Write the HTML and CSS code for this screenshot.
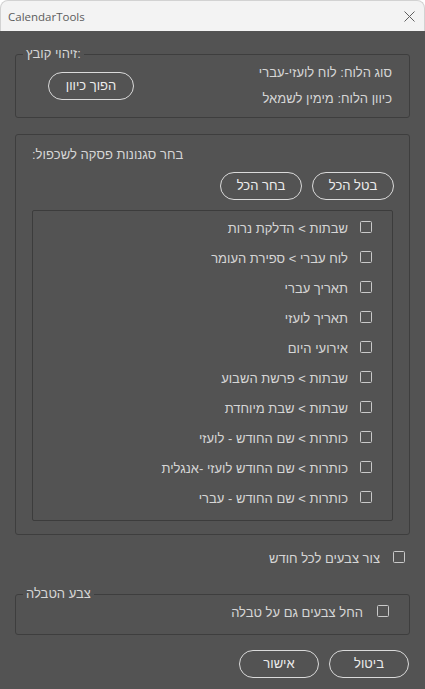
FILE: index.html
```html
<!DOCTYPE html>
<html lang="he">
<head>
<meta charset="utf-8">
<title>CalendarTools</title>
<link rel="stylesheet" href="styles.css">
</head>
<body>
<div class="window">
  <header class="titlebar">
    <span class="title">CalendarTools</span>
    <svg class="close" width="11" height="11" viewBox="0 0 11 11"><path d="M0.5 0.5 L10.5 10.5 M10.5 0.5 L0.5 10.5" stroke="#5f5f5f" stroke-width="1" fill="none"/></svg>
  </header>
  <main class="content">
    <fieldset class="group group-file">
      <legend class="legend-ltr">זיהוי קובץ:</legend>
      <div class="file-row">
        <div class="file-info">
          <div class="line">סוג הלוח: לוח לועזי-עברי</div>
          <div class="line">כיוון הלוח: מימין לשמאל</div>
        </div>
        <button class="pill btn-flip">הפוך כיוון</button>
      </div>
    </fieldset>

    <section class="box group-styles">
      <div class="styles-label">בחר סגנונות פסקה לשכפול:</div>
      <div class="btn-row">
        <button class="pill btn-sel">בטל הכל</button>
        <button class="pill btn-sel">בחר הכל</button>
      </div>
      <ul class="list">
        <li class="item"><span class="check"></span><span>שבתות &gt; הדלקת נרות</span></li>
        <li class="item"><span class="check"></span><span>לוח עברי &gt; ספירת העומר</span></li>
        <li class="item"><span class="check"></span><span>תאריך עברי</span></li>
        <li class="item"><span class="check"></span><span>תאריך לועזי</span></li>
        <li class="item"><span class="check"></span><span>אירועי היום</span></li>
        <li class="item"><span class="check"></span><span>שבתות &gt; פרשת השבוע</span></li>
        <li class="item"><span class="check"></span><span>שבתות &gt; שבת מיוחדת</span></li>
        <li class="item"><span class="check"></span><span>כותרות &gt; שם החודש - לועזי</span></li>
        <li class="item"><span class="check"></span><span>כותרות &gt; שם החודש לועזי -אנגלית</span></li>
        <li class="item"><span class="check"></span><span>כותרות &gt; שם החודש - עברי</span></li>
      </ul>
    </section>

    <div class="option-row month-row"><span class="check"></span><span>צור צבעים לכל חודש</span></div>

    <fieldset class="group group-table">
      <legend>צבע הטבלה</legend>
      <div class="option-row table-row"><span class="check"></span><span>החל צבעים גם על טבלה</span></div>
    </fieldset>

    <div class="actions">
      <button class="pill btn-action">ביטול</button>
      <button class="pill btn-action">אישור</button>
    </div>
  </main>
</div>
</body>
</html>
```

FILE: styles.css
```css
* { box-sizing: border-box; }

body {
  margin: 0;
  background: #ffffff;
  font-family: "Liberation Sans", Arial, sans-serif;
  font-size: 13px;
  color: #d6d6d6;
}

.window {
  width: 425px;
  height: 689px;
  display: flex;
  flex-direction: column;
}

.titlebar {
  height: 31px;
  flex: none;
  background: #f3f3f3;
  border: 1px solid #d2d2d2;
  border-bottom: none;
  border-radius: 8px 8px 0 0;
  display: flex;
  align-items: center;
  justify-content: space-between;
  padding: 0 9px 0 7px;
  font-family: "Open Sans", "Noto Sans", sans-serif;
  font-size: 11.5px;
  color: #5c5c5c;
}

.close { display: block; }

.content {
  flex: 1;
  background: #535353;
  padding: 0 15px;
  display: flex;
  flex-direction: column;
}

.group {
  margin: 0;
  padding: 0 0 0 7px;
  border: 1px solid #3e3e3e;
  border-radius: 3px;
  min-width: 0;
  direction: ltr;
}

.group legend {
  padding: 0 3px;
  line-height: 16px;
  direction: rtl;
}

.group .legend-ltr { direction: ltr; }

.group-file { margin-top: 15px; }

.file-row {
  direction: rtl;
  display: flex;
  align-items: center;
  justify-content: space-between;
  padding: 3px 17px 10px 25px;
}

.line { line-height: 16px; }
.line + .line { margin-top: 10px; }

.pill {
  height: 28px;
  padding: 0;
  border: 1px solid #dadada;
  border-radius: 14px;
  background: transparent;
  color: #ececec;
  font: inherit;
  line-height: 26px;
}

.btn-flip { width: 86px; }
.btn-sel { width: 82px; }
.btn-action { width: 80px; }

.box {
  margin-top: 16px;
  border: 1px solid #3e3e3e;
  border-radius: 3px;
  padding: 12px 16px 13px;
  direction: rtl;
}

.styles-label {
  line-height: 16px;
  text-align: left;
}

.btn-row {
  display: flex;
  gap: 10px;
  margin: 9px -1px 0 0;
}

.list {
  list-style: none;
  margin: 10px 0 0;
  padding: 2px 20px 7px 0;
  border: 1px solid #3c3c3c;
  border-radius: 2px;
}

.item {
  height: 30px;
  display: flex;
  align-items: center;
  gap: 12px;
  white-space: nowrap;
}

.check {
  width: 12px;
  height: 12px;
  flex: none;
  border: 1px solid #c9c9c9;
  border-radius: 1.5px;
  margin-top: -2px;
}

.option-row {
  direction: rtl;
  display: flex;
  align-items: center;
  height: 16px;
}

.month-row {
  margin-top: 15px;
  padding-right: 5px;
  gap: 13px;
}

.group-table { margin-top: 20px; }

.table-row {
  margin: 2px 0 14px;
  padding-right: 20px;
  gap: 14px;
}

.actions {
  direction: rtl;
  display: flex;
  gap: 10px;
  margin-top: 15px;
  margin-right: 1px;
}
```
